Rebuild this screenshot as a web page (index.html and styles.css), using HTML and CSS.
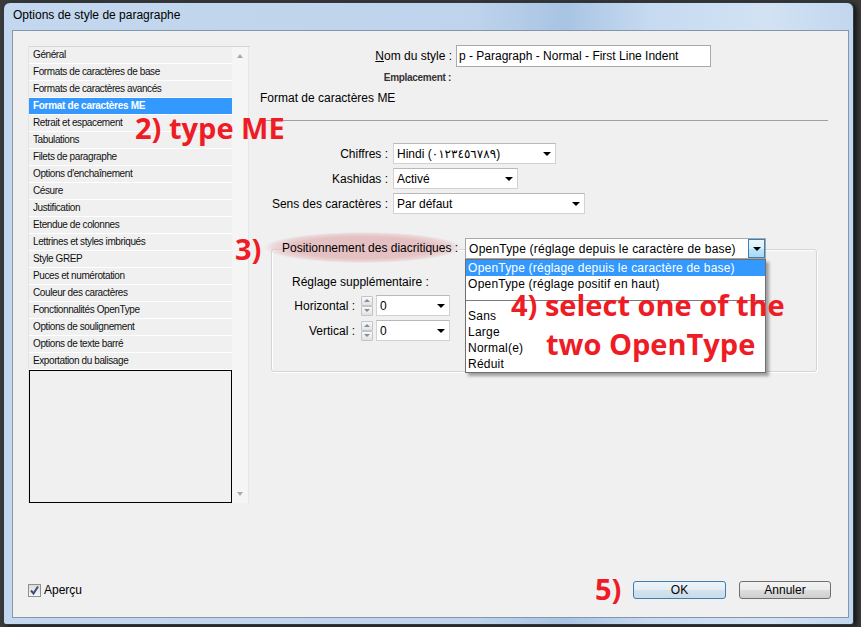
FILE: index.html
```html
<!DOCTYPE html>
<html lang="fr">
<head>
<meta charset="utf-8">
<title>Options de style de paragraphe</title>
<link rel="stylesheet" href="styles.css">
</head>
<body>
<div class="window">
  <div class="titlebar">Options de style de paragraphe</div>
  <div class="client">
    <div class="body">
      <div class="listbox">
        <div class="items">
          <ul class="cats">
            <li>Général</li>
            <li>Formats de caractères de base</li>
            <li>Formats de caractères avancés</li>
            <li class="sel">Format de caractères ME</li>
            <li>Retrait et espacement</li>
            <li>Tabulations</li>
            <li>Filets de paragraphe</li>
            <li>Options d'enchaînement</li>
            <li>Césure</li>
            <li>Justification</li>
            <li>Etendue de colonnes</li>
            <li>Lettrines et styles imbriqués</li>
            <li>Style GREP</li>
            <li>Puces et numérotation</li>
            <li>Couleur des caractères</li>
            <li>Fonctionnalités OpenType</li>
            <li>Options de soulignement</li>
            <li>Options de texte barré</li>
            <li>Exportation du balisage</li>
          </ul>
          <div class="preview"></div>
        </div>
        <div class="scrollbar"><span class="tri-up"></span><span class="tri-down"></span></div>
      </div>

      <div class="main">
        <div class="name-row">
          <span class="name-lbl"><span class="u">N</span>om du style :</span>
          <span class="textbox">p - Paragraph - Normal - First Line Indent</span>
        </div>
        <div class="emp">Emplacement :</div>
        <div class="section-title">Format de caractères ME</div>
        <div class="rule"></div>

        <div class="fields">
          <span class="flbl">Chiffres :</span>
          <span class="combo w-chiffres"><span class="val">Hindi (٠١٢٣٤٥٦٧٨٩)</span><span class="arrow"><span class="tri"></span></span></span>
          <span class="flbl">Kashidas :</span>
          <span class="combo w-kashidas"><span class="val">Activé</span><span class="arrow"><span class="tri"></span></span></span>
          <span class="flbl">Sens des caractères :</span>
          <span class="combo w-sens"><span class="val">Par défaut</span><span class="arrow"><span class="tri"></span></span></span>
        </div>

        <div class="group">
          <div class="group-head">
            <span class="diacr">Positionnement des diacritiques :</span>
            <span class="combo open w-diacr">
              <span class="val">OpenType (réglage depuis le caractère de base)</span>
              <span class="arrow drop"><span class="tri"></span></span>
              <ul class="popup">
                <li class="sel">OpenType (réglage depuis le caractère de base)</li>
                <li>OpenType (réglage positif en haut)</li>
                <li class="sep"></li>
                <li>Sans</li>
                <li>Large</li>
                <li>Normal(e)</li>
                <li>Réduit</li>
              </ul>
            </span>
          </div>
          <div class="adj-title">Réglage supplémentaire :</div>
          <div class="adj-rows">
            <div class="adj-row">
              <span class="alb">Horizontal :</span>
              <span class="spin"><span class="sb"><span class="su"></span></span><span class="sb"><span class="sd"></span></span></span>
              <span class="combo w-small"><span class="val">0</span><span class="arrow"><span class="tri"></span></span></span>
            </div>
            <div class="adj-row">
              <span class="alb">Vertical :</span>
              <span class="spin"><span class="sb"><span class="su"></span></span><span class="sb"><span class="sd"></span></span></span>
              <span class="combo w-small"><span class="val">0</span><span class="arrow"><span class="tri"></span></span></span>
            </div>
          </div>
        </div>
      </div>
    </div>

    <div class="footer">
      <span class="chk"><svg width="11" height="11" viewBox="0 0 11 11"><path d="M2 5.5 L4.5 8.5 L9 1.5" fill="none" stroke="#3b4f7c" stroke-width="2"/></svg></span>
      <span class="chk-lbl">Aperçu</span>
      <span class="spacer"></span>
      <span class="btn ok">OK</span>
      <span class="btn">Annuler</span>
    </div>
  </div>
</div>

<div class="note n2">2) type ME</div>
<div class="note n3">3)</div>
<div class="note n4"><span class="l1">4) select one of the</span><span class="l2">two OpenType</span></div>
<div class="note n5">5)</div>
</body>
</html>
```

FILE: styles.css
```css
* { box-sizing: border-box; }
html, body { margin: 0; padding: 0; }
body {
  width: 861px;
  height: 627px;
  overflow: hidden;
  position: relative;
  background: #3a3a3a;
  font-family: "Liberation Sans", "DejaVu Sans", Arial, sans-serif;
  font-size: 12px;
  color: #000;
}

/* window frame */
.window {
  margin: 2px 0 0 3px;
  width: 851px;
  height: 623px;
  border: 1px solid #2f3944;
  border-radius: 7px 7px 3px 3px;
  background: linear-gradient(to right, #c3d7ee 0%, #bfd4ec 55%, #a8c4e3 66%, #c6daf0 76%, #d2e2f3 90%, #c2d6ed 100%);
  padding: 0 4px 6px 8px;
  display: flex;
  flex-direction: column;
  box-shadow: 3px 1px 4px rgba(0,0,0,0.6);
}
.titlebar {
  height: 27px;
  line-height: 24px;
  padding-left: 1px;
  font-size: 12px;
  color: #000;
}
.client {
  flex: 1;
  border: 1px solid #8496ab;
  background: #f0f0f0;
  display: flex;
  flex-direction: column;
}
.body {
  flex: 1;
  display: flex;
  align-items: flex-start;
  padding: 15px 0 0 15px;
}

/* left list */
.listbox {
  width: 222px;
  height: 457px;
  display: flex;
  border-top: 1px solid #d6d6d6;
  border-left: 1px solid #e4e4e4;
}
.items {
  width: 203px;
  display: flex;
  flex-direction: column;
}
.cats {
  margin: 0;
  padding: 0;
  list-style: none;
}
.cats li {
  height: 17px;
  line-height: 16px;
  border-bottom: 1px solid #ffffff;
  padding-left: 4px;
  font-size: 10px;
  letter-spacing: -0.4px;
  white-space: nowrap;
  color: #111;
}
.cats li.sel {
  background: #3399ff;
  color: #fff;
  font-weight: bold;
  letter-spacing: -0.3px;
}
.preview {
  height: 133px;
  border: 1px solid #000;
}
.scrollbar {
  width: 17px;
  background: #f5f5f5;
  border-right: 1px solid #e6e6e6;
  display: flex;
  flex-direction: column;
  justify-content: space-between;
  align-items: center;
  padding: 7px 0 7px;
}
.tri-up {
  width: 0; height: 0;
  border-left: 3.5px solid transparent;
  border-right: 3.5px solid transparent;
  border-bottom: 4px solid #a9a9a9;
}
.tri-down {
  width: 0; height: 0;
  border-left: 3.5px solid transparent;
  border-right: 3.5px solid transparent;
  border-top: 4px solid #a9a9a9;
}

/* main column */
.main {
  margin-left: 10px;
  margin-top: -1px;
  width: 568px;
  display: flex;
  flex-direction: column;
}
.name-row {
  display: flex;
  align-items: center;
  height: 22px;
}
.name-lbl {
  width: 192px;
  text-align: right;
}
.u { text-decoration: underline; }
.textbox {
  margin-left: 4px;
  width: 255px;
  height: 22px;
  line-height: 20px;
  border: 1px solid #a9a9a9;
  background: #fff;
  padding-left: 2px;
  white-space: nowrap;
}
.emp {
  margin-top: 5px;
  width: 191px;
  text-align: right;
  font-size: 10px;
  line-height: 12px;
  font-weight: bold;
  letter-spacing: -0.3px;
  color: #333;
}
.section-title {
  margin-top: 6px;
  line-height: 16px;
}
.rule {
  margin-top: 14px;
  border-top: 1px solid #a0a0a0;
}
.fields {
  margin-top: 22px;
  display: grid;
  grid-template-columns: 128px max-content;
  grid-auto-rows: 21px;
  column-gap: 5px;
  row-gap: 4px;
  align-items: center;
}
.flbl { text-align: right; white-space: nowrap; }

.combo {
  display: flex;
  align-items: center;
  height: 21px;
  background: #fff;
  border: 1px solid #d2d2d2;
  border-top-color: #b9b9b9;
  position: relative;
}
.combo .val {
  flex: 1;
  padding-left: 3px;
  white-space: nowrap;
  overflow: hidden;
}
.combo .arrow {
  width: 17px;
  align-self: stretch;
  display: flex;
  align-items: center;
  justify-content: center;
}
.tri {
  width: 0; height: 0;
  border-left: 4px solid transparent;
  border-right: 4px solid transparent;
  border-top: 4px solid #000;
}
.w-chiffres { width: 163px; }
.w-kashidas { width: 125px; }
.w-sens { width: 192px; }
.w-small { width: 74px; }
.w-diacr { width: 301px; }

/* group box */
.group {
  margin-top: 35px;
  margin-left: 11px;
  width: 546px;
  height: 123px;
  border: 1px solid #d5d5d5;
  border-radius: 3px;
  box-shadow: inset 1px 1px 0 #fff, 1px 1px 0 #fff;
}
.group-head {
  margin-top: -12px;
  padding-left: 9px;
  display: flex;
  align-items: center;
  height: 21px;
}
.diacr {
  position: relative;
  z-index: 0;
  background: #f0f0f0;
  padding: 0 1px;
  line-height: 21px;
  white-space: nowrap;
}
.diacr::before {
  content: "";
  position: absolute;
  z-index: -1;
  left: -17px;
  right: -3px;
  top: -6px;
  bottom: -4px;
  background: radial-gradient(closest-side, rgba(229,190,192,0.95) 70%, rgba(229,190,192,0.5) 90%, rgba(229,190,192,0) 100%);
}
.combo.open {
  margin-left: 6px;
  border-color: #a7a7a7;
  letter-spacing: 0.2px;
}
.combo .drop {
  margin: 0;
  border: 1px solid #3c7fb1;
  background: linear-gradient(#eaf6fd 0%, #d9f0fc 50%, #bee6fd 51%, #a7d9f5 100%);
}
.popup {
  position: absolute;
  left: -1px;
  top: 20px;
  width: 301px;
  margin: 0;
  padding: 0;
  list-style: none;
  background: #fff;
  border: 1px solid #6f6f6f;
  box-shadow: 3px 3px 3px rgba(0,0,0,0.35);
  z-index: 2;
}
.popup li {
  height: 16px;
  line-height: 16px;
  padding-left: 2px;
  white-space: nowrap;
}
.popup li.sel {
  background: #3399ff;
  color: #fff;
}
.popup li.sep {
  position: relative;
}
.popup li.sep::after {
  content: "";
  position: absolute;
  left: 0;
  right: 0;
  top: 8px;
  border-top: 1px solid #7a7a7a;
}
.adj-title {
  margin-top: 15px;
  padding-left: 20px;
  line-height: 16px;
}
.adj-rows {
  margin-top: 5px;
  padding-left: 20px;
  display: flex;
  flex-direction: column;
  gap: 4px;
}
.adj-row {
  display: flex;
  align-items: center;
  height: 21px;
}
.alb {
  width: 63px;
  text-align: right;
  white-space: nowrap;
}
.spin {
  margin-left: 6px;
  width: 12px;
  height: 20px;
  display: flex;
  flex-direction: column;
  gap: 0;
}
.sb {
  flex: 1;
  border: 1px solid #c4c4c4;
  border-radius: 1px;
  background: linear-gradient(#f8f8f8, #e2e2e2);
  display: flex;
  align-items: center;
  justify-content: center;
}
.su {
  width: 0; height: 0;
  border-left: 3px solid transparent;
  border-right: 3px solid transparent;
  border-bottom: 3px solid #7e8ca8;
}
.sd {
  width: 0; height: 0;
  border-left: 3px solid transparent;
  border-right: 3px solid transparent;
  border-top: 3px solid #7e8ca8;
}
.adj-row .combo { margin-left: 3px; }

/* footer */
.footer {
  display: flex;
  align-items: center;
  padding: 0 17px 18px 15px;
}
.chk {
  width: 13px;
  height: 13px;
  border: 1px solid #8e8f8f;
  background: linear-gradient(#dcdcdc, #f6f6f6);
  display: flex;
  align-items: center;
  justify-content: center;
}
.chk-lbl { margin-left: 3px; }
.spacer { flex: 1; }
.btn {
  width: 92px;
  height: 18px;
  line-height: 16px;
  text-align: center;
  border: 1px solid #707070;
  border-radius: 3px;
  background: linear-gradient(#f2f2f2 0%, #ebebeb 50%, #dddddd 51%, #cfcfcf 100%);
  margin-left: 13px;
}
.btn.ok {
  width: 93px;
  border-color: #3c7fb1;
  background: linear-gradient(#eef4f9 0%, #e3edf5 50%, #d3e2ee 51%, #cadcea 100%);
  margin-left: 0;
}

/* annotations */
.note {
  position: absolute;
  font-family: "Open Sans", "DejaVu Sans", sans-serif;
  font-weight: 700;
  font-size: 29px;
  line-height: 39px;
  color: #ee1c25;
  white-space: nowrap;
  z-index: 5;
}
.n2 { left: 135px; top: 108px; }
.n3 { left: 235px; top: 229px; }
.n4 { left: 511px; top: 285px; }
.n4 .l1, .n4 .l2 { display: block; }
.n4 .l2 { padding-left: 35px; }
.n5 { left: 595px; top: 569px; }
```
